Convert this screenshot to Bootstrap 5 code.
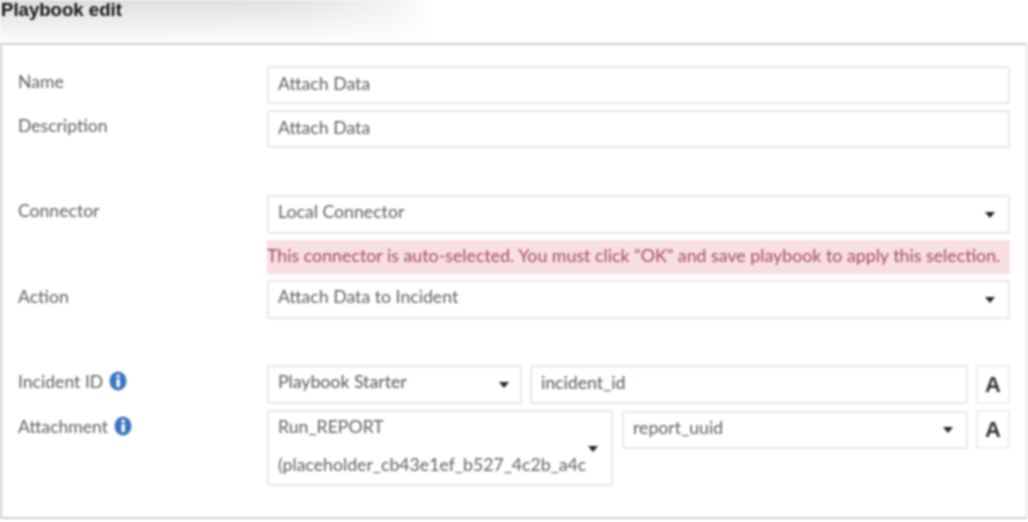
<!DOCTYPE html>
<html lang="en">
<head>
    <meta charset="UTF-8">
    <meta name="viewport" content="width=device-width, initial-scale=1.0">
    <title>Playbook edit</title>
    <link rel="stylesheet" href="https://cdn.jsdelivr.net/npm/bootstrap@5.3.0/dist/css/bootstrap.min.css">
    <style>
        body { font-family: Lato, "Liberation Sans", sans-serif; font-size: 17.6px; color: #606060; background: #fff; overflow: hidden; }
        .page-wrap { width: 1028px; height: 522px; filter: blur(.9px); }
        .pb-head { height: 43px; padding-left: 1px; font-family: "Liberation Sans", sans-serif; font-weight: 700; font-size: 18.6px; color: #111; line-height: 20px;
            background: linear-gradient(180deg, rgba(255,255,255,0) 0, rgba(255,255,255,.95) 100%), linear-gradient(90deg, #dcdcdc 0, #e2e2e2 290px, #f2f2f2 390px, #fff 435px); }
        .pb-panel { width: 1027px; height: 476px; border: 2px solid #cfcfcf; border-right-width: 1px; padding: 21px 17px 0 16px; }
        .pb-row { display: flex; margin-bottom: 6px; }
        .pb-label { width: 249px; flex: none; padding-top: 4px; line-height: 24px; }
        .pb-label-low { padding-top: 5px; }
        .pb-body { width: 743px; flex: none; }
        .pb-field { height: 38px; border: 2px solid #e8e8e8; border-radius: 2px; padding: 0 13px 4px 9px; color: #606060; font-size: 17.7px; background: #fff; box-shadow: none; }
        .pb-field-lg { height: 39px; }
        .pb-caret { width: 0; height: 0; flex: none; border: 5px solid transparent; border-top: 6px solid #222; border-bottom: 0; margin-top: 4px; }
        .pb-gap-conn { margin-top: 47px; }
        .pb-gap-inc { margin-top: 46px; }
        .pb-warn { height: 34px; line-height: 30px; background: #f7dfe4; color: #a94a63; font-size: 17.8px; white-space: nowrap; margin: 6px 0; }
        .pb-a { width: 34px; height: 39px; flex: none; border: 2px solid #eee; font-family: "Liberation Sans", sans-serif; font-weight: 700; font-size: 22px; color: #333; }
        .pb-starter { width: 255px; flex: none; padding-right: 11px; }
        .pb-tall { width: 346px; height: 76px; flex: none; position: relative; padding-bottom: 0; margin-right: 1px; white-space: nowrap; overflow: hidden; font-size: 17.7px; }
        .pb-tall .pb-caret { position: absolute; right: 13px; top: 34px; margin: 0; }
        .pb-tall-line { line-height: 30px; height: 30px; margin-bottom: 8px; }
        .pb-report { margin-top: 1px; }
        .pb-info { vertical-align: -3px; margin-left: 1px; }
    </style>
</head>
<body>
    <div class="page-wrap">
        <div class="pb-head">Playbook edit</div>
        <div class="pb-panel">
            <div class="pb-row">
                <div class="pb-label">Name</div>
                <div class="pb-body"><input class="form-control pb-field" value="Attach Data"></div>
            </div>
            <div class="pb-row">
                <div class="pb-label">Description</div>
                <div class="pb-body"><input class="form-control pb-field" value="Attach Data"></div>
            </div>

            <div class="pb-row pb-gap-conn mb-0">
                <div class="pb-label">Connector</div>
                <div class="pb-body">
                    <div class="pb-field pb-field-lg d-flex align-items-center justify-content-between">Local Connector <span class="pb-caret"></span></div>
                    <div class="pb-warn">This connector is auto-selected. You must click "OK" and save playbook to apply this selection.</div>
                </div>
            </div>
            <div class="pb-row mb-0">
                <div class="pb-label pb-label-low">Action</div>
                <div class="pb-body">
                    <div class="pb-field pb-field-lg d-flex align-items-center justify-content-between">Attach Data to Incident <span class="pb-caret"></span></div>
                </div>
            </div>

            <div class="pb-row pb-gap-inc">
                <div class="pb-label pb-label-low">Incident ID
                    <svg class="pb-info" width="18" height="20" viewBox="0 0 18 20"><ellipse cx="9" cy="10" rx="8.5" ry="9.5" fill="#3b76c4"/><rect x="7.5" y="8" width="3.4" height="8" fill="#fff"/><rect x="7.5" y="3.8" width="3.4" height="2.8" fill="#fff"/></svg>
                </div>
                <div class="pb-body d-flex gap-2">
                    <div class="pb-field pb-field-lg pb-starter d-flex align-items-center justify-content-between">Playbook Starter <span class="pb-caret"></span></div>
                    <input class="form-control pb-field pb-field-lg flex-grow-1 w-auto" value="incident_id">
                    <div class="pb-a d-flex align-items-center justify-content-center">A</div>
                </div>
            </div>
            <div class="pb-row">
                <div class="pb-label pb-label-low">Attachment
                    <svg class="pb-info" width="18" height="20" viewBox="0 0 18 20"><ellipse cx="9" cy="10" rx="8.5" ry="9.5" fill="#3b76c4"/><rect x="7.5" y="8" width="3.4" height="8" fill="#fff"/><rect x="7.5" y="3.8" width="3.4" height="2.8" fill="#fff"/></svg>
                </div>
                <div class="pb-body d-flex gap-2 align-items-start">
                    <div class="pb-field pb-tall">
                        <div class="pb-tall-line">Run_REPORT</div>
                        <div class="pb-tall-line">(placeholder_cb43e1ef_b527_4c2b_a4c</div>
                        <span class="pb-caret"></span>
                    </div>
                    <div class="pb-field pb-report d-flex align-items-center justify-content-between flex-grow-1">report_uuid <span class="pb-caret"></span></div>
                    <div class="pb-a d-flex align-items-center justify-content-center">A</div>
                </div>
            </div>
        </div>
    </div>
    <script src="https://cdn.jsdelivr.net/npm/bootstrap@5.3.0/dist/js/bootstrap.bundle.min.js"></script>
</body>
</html>
